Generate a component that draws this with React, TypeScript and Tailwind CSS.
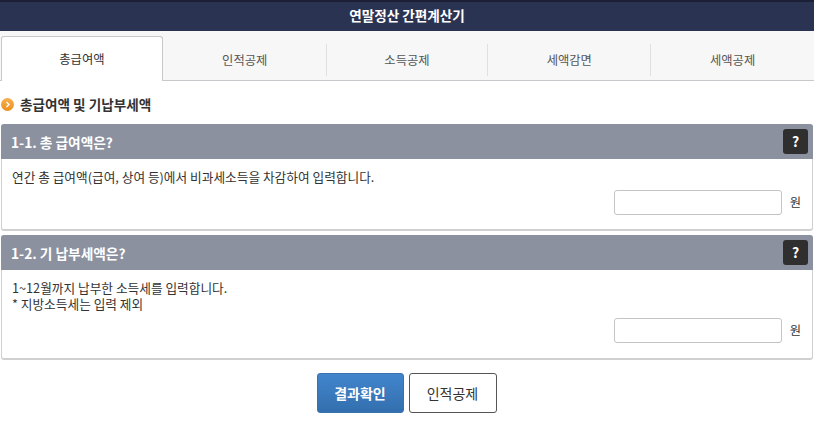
import React from 'react';

const tabs = ['총급여액', '인적공제', '소득공제', '세액감면', '세액공제'];

interface SectionProps {
  title: string;
  lines: string[];
  height: string;
  inputGap: string;
}

const Section: React.FC<SectionProps> = ({ title, lines, height, inputGap }) => {
  return (
    <div className={`mx-px rounded-[3px] border-b-2 border-r border-l border-[#d0d0d0] bg-white ${height}`}>
      <div className="-mx-px flex h-[35px] items-center justify-between rounded-t-[3px] bg-[#8b919f] pl-[10px] pr-[5px]">
        <h3 className="pt-[1px] text-[13.7px] font-bold text-white">{title}</h3>
        <button className="flex h-[25px] w-[25px] items-center justify-center rounded-[3px] bg-[#2f2f2f] text-[14px] font-bold text-white">
          ?
        </button>
      </div>
      <div className="px-[10px] pt-[10px] text-[12.7px] leading-[16px] text-[#333]">
        {lines.map((line) => (
          <p key={line}>{line}</p>
        ))}
      </div>
      <div className={`flex items-center justify-end pr-[11px] ${inputGap}`}>
        <input className="h-[25px] w-[168px] rounded-[3px] border border-[#c4c4c4] bg-white" />
        <span className="ml-[8px] text-[12.3px] text-[#333]">원</span>
      </div>
    </div>
  );
};

const App: React.FC = () => {
  return (
    <div className="h-[422px] w-[814px] overflow-hidden bg-white font-['Noto_Sans_CJK_KR','Noto_Sans',sans-serif]">
      {/* Title */}
      <div className="flex h-[31px] items-center justify-center border-t-2 border-[#1b2036] bg-[#2b3353] pb-[2px] text-[13.6px] font-bold text-white">
        연말정산 간편계산기
      </div>

      {/* Tabs */}
      <div className="flex h-[50px] items-end border-b border-[#c8c8cc] bg-[#f7f7f7] pl-px">
        {tabs.map((tab, i) => (
          <div
            key={tab}
            className={
              i === 0
                ? '-mb-px flex h-[45px] w-[162px] items-center justify-center rounded-t-[3px] border border-b-0 border-[#c8c8cc] bg-white text-[12.3px] text-[#333]'
                : `mb-[4px] flex h-[32px] items-center justify-center border-r border-[#e0e0e0] text-[12.3px] text-[#555] last:border-r-0 ${i === 1 ? 'ml-px w-[163px]' : i === 2 ? 'w-[162px]' : 'w-[163px]'}`
            }
          >
            {tab}
          </div>
        ))}
      </div>

      {/* Heading */}
      <div className="flex h-[43px] items-center pl-px pt-[4px]">
        <span className="flex h-[13px] w-[13px] items-center justify-center rounded-full bg-gradient-to-b from-[#f7b04a] to-[#ec8f1c]">
          <svg width="7" height="7" viewBox="0 0 7 7" fill="none" stroke="#fff" strokeWidth="1.4">
            <path d="M2.5 1 5 3.5 2.5 6" />
          </svg>
        </span>
        <h2 className="ml-[6px] text-[13.6px] font-bold text-[#333]">총급여액 및 기납부세액</h2>
      </div>

      <Section
        title="1-1. 총 급여액은?"
        lines={['연간 총 급여액(급여, 상여 등)에서 비과세소득을 차감하여 입력합니다.']}
        height="h-[107px]"
        inputGap="pt-[5px]"
      />
      <div className="h-[4px]" />
      <Section
        title="1-2. 기 납부세액은?"
        lines={['1~12월까지 납부한 소득세를 입력합니다.', '* 지방소득세는 입력 제외']}
        height="h-[125px]"
        inputGap="pt-[6px]"
      />

      {/* Buttons */}
      <div className="mt-[13px] flex justify-center gap-[5px] pr-px">
        <button className="h-[40px] w-[87px] rounded-[3px] border border-[#3a70ad] bg-gradient-to-b from-[#4285cd] to-[#336fae] text-[14px] font-bold text-white">
          결과확인
        </button>
        <button className="h-[40px] w-[88px] rounded-[3px] border border-[#555] bg-white text-[14px] text-[#333]">
          인적공제
        </button>
      </div>
    </div>
  );
};

export default App;
